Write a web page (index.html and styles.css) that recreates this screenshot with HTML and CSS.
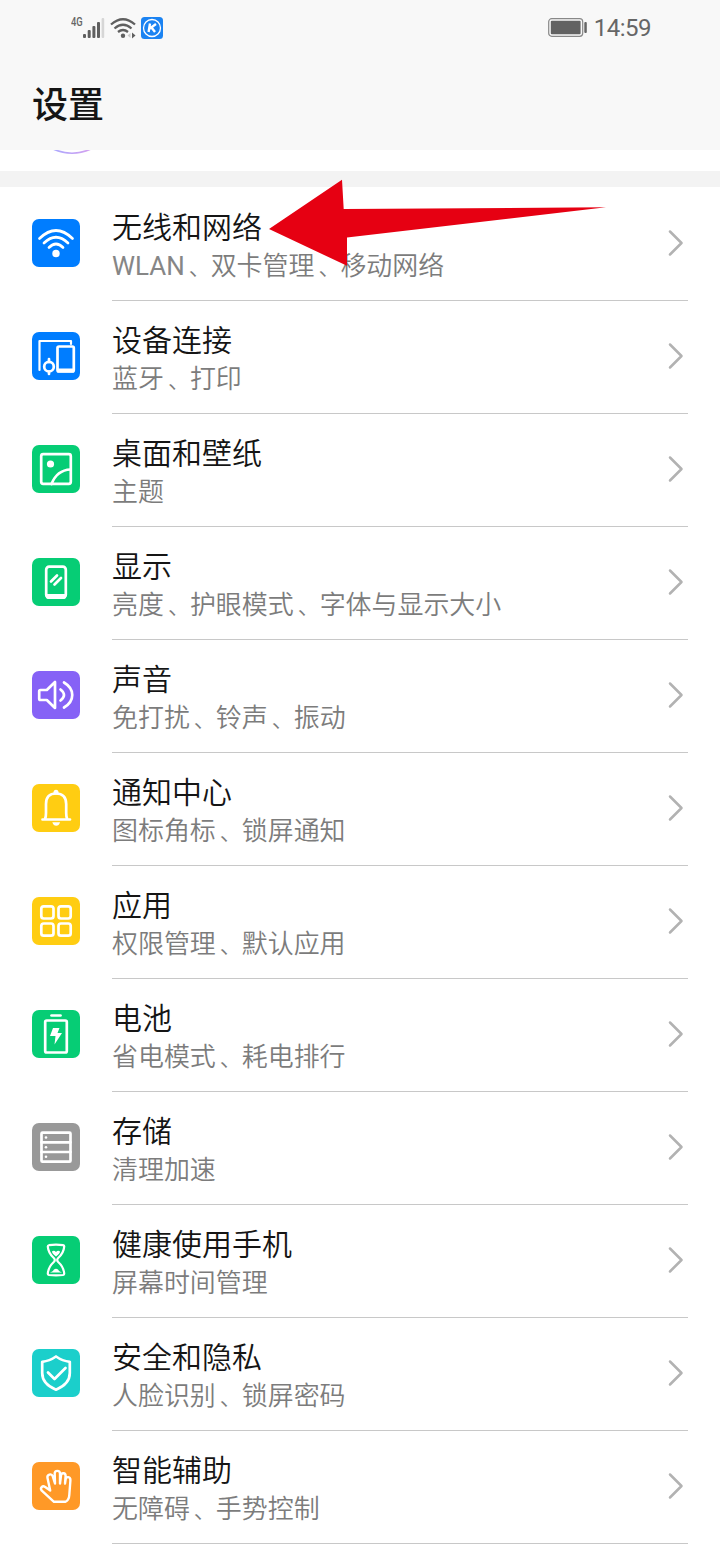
FILE: index.html
```
<!DOCTYPE html>
<html lang="zh-CN">
<head>
<meta charset="utf-8">
<title>设置</title>
<link rel="stylesheet" href="styles.css">
</head>
<body>
<div class="screen">
  <header class="header">
    <div class="status">
      <div class="status-left">
        <span class="net">4G</span>
        <svg class="signal" width="22" height="22" viewBox="0 0 22 22"><g fill="#5f5f5f"><rect x="0" y="17" width="3" height="4" rx="1"/><rect x="4.700" y="13" width="3" height="8" rx="1"/><rect x="9.400" y="9" width="3" height="12" rx="1"/><rect x="14" y="5" width="3" height="16" rx="1"/></g><rect x="18.600" y="1" width="2.600" height="20" rx="1" fill="#d6d6d6"/></svg>
        <svg class="wifi" width="26" height="22" viewBox="0 0 26 22"><g fill="none" stroke="#5f5f5f" stroke-width="2.300"><path d="M1 7.500Q13-3 25 7.500"/><path d="M4.500 11.500Q13 4 21.500 11.500"/><path d="M8 15Q13 11 18 15"/></g><circle cx="13" cy="18.800" r="2.200" fill="#5f5f5f"/><path d="M20.500 16v5l-3-2.500z" fill="#ccc"/><path d="M22 15.500v6l3.500-3z" fill="#5f5f5f"/></svg>
        <svg class="kapp" width="22" height="22" viewBox="0 0 22 22"><rect width="22" height="22" rx="3.500" fill="#1b83f2"/><circle cx="11" cy="11" r="8.500" fill="none" stroke="#fff" stroke-width="1.300"/><path d="M9 6.500 7.600 15M15 7l-6.200 4.500M10.500 10.500l3.500 4.500" fill="none" stroke="#fff" stroke-width="2.400"/></svg>
      </div>
      <div class="status-right">
        <svg width="39" height="20" viewBox="0 0 39 20"><rect x=".7" y=".7" width="34" height="17.600" rx="3" fill="#f8f8f8" stroke="#888" stroke-width="1.200"/><rect x="2.800" y="2.800" width="29.800" height="13.400" rx="1" fill="#626262"/><rect x="36.300" y="4" width="2.500" height="11" rx="1" fill="#666"/></svg>
        <span class="time">14:59</span>
      </div>
    </div>
    <h1 class="title">设置</h1>
  </header>
  <div class="account"><svg width="48" height="6" viewBox="0 0 48 6"><defs><linearGradient id="ring"><stop offset="0" stop-color="#a9a9ff"/><stop offset="1" stop-color="#d6a0ee"/></linearGradient></defs><path d="M3-2Q24 8.500 45-2" fill="none" stroke="url(#ring)" stroke-width="1.700"/></svg></div>
  <div class="band"></div>
  <main class="list" id="list">
    <div class="row"><svg class="icon blue" viewBox="0 0 48 48"><g class="ln"><path d="M7.500 19.500Q24 3.500 40.500 19.500"/><path d="M12 24Q24 12.500 36 24"/><path d="M17 28.500Q24 21.500 31 28.500"/></g><circle cx="24" cy="34.500" r="3.700" fill="#fff"/></svg><div class="body"><div class="text"><div class="name">无线和网络</div><div class="desc"><span class="latin">WLAN</span><i>、</i>双卡管理<i>、</i>移动网络</div></div><svg class="chev" viewBox="0 0 16 28"><path d="M2 2.500 13.500 14 2 25.500"/></svg></div></div>
    <div class="row"><svg class="icon blue" viewBox="0 0 48 48"><path class="ln thin" d="M7.500 38V9H39v3"/><rect class="ln" x="25.500" y="14.500" width="16.300" height="25" rx="1.500"/><path d="M25.500 36.500h16.300v4H25.500z" fill="#fff"/><circle class="ln" cx="17" cy="34.700" r="4.800"/><path class="ln" d="M17 27v3M17 39.500V42"/></svg><div class="body"><div class="text"><div class="name">设备连接</div><div class="desc">蓝牙<i>、</i>打印</div></div><svg class="chev" viewBox="0 0 16 28"><path d="M2 2.500 13.500 14 2 25.500"/></svg></div></div>
    <div class="row"><svg class="icon green" viewBox="0 0 48 48"><rect class="ln" x="9.200" y="9.200" width="29.600" height="29.600" rx="2"/><circle cx="18.500" cy="19" r="3.600" fill="#fff"/><path class="ln" d="M19.500 39Q25 25 38.500 24.500"/></svg><div class="body"><div class="text"><div class="name">桌面和壁纸</div><div class="desc">主题</div></div><svg class="chev" viewBox="0 0 16 28"><path d="M2 2.500 13.500 14 2 25.500"/></svg></div></div>
    <div class="row"><svg class="icon green" viewBox="0 0 48 48"><rect class="ln" x="14.200" y="8.700" width="19.600" height="31" rx="3"/><path d="M14 36h20v2.500q0 2.500-2.500 2.500h-15Q14 41 14 38.500z" fill="#fff"/><path class="ln" d="m19 23.500 6-6M22.500 26.500l6.500-6.500"/></svg><div class="body"><div class="text"><div class="name">显示</div><div class="desc">亮度<i>、</i>护眼模式<i>、</i>字体与显示大小</div></div><svg class="chev" viewBox="0 0 16 28"><path d="M2 2.500 13.500 14 2 25.500"/></svg></div></div>
    <div class="row"><svg class="icon purple" viewBox="0 0 48 48"><path class="ln" d="M8.500 19h6.300L23 11v26l-8.200-8H8.500Q7.200 29 7.200 27.700v-7.400Q7.200 19 8.500 19z"/><path class="ln" d="M28.500 18.500q7 5.500 0 11M32 11.500c11 6.500 11 18.500 0 25"/></svg><div class="body"><div class="text"><div class="name">声音</div><div class="desc">免打扰<i>、</i>铃声<i>、</i>振动</div></div><svg class="chev" viewBox="0 0 16 28"><path d="M2 2.500 13.500 14 2 25.500"/></svg></div></div>
    <div class="row"><svg class="icon yellow" viewBox="0 0 48 48"><path class="ln" d="M10.500 35.500h27.500M13 35q1-2 1-6v-9q0-10.500 10-10.500T34.200 20v9q0 4 1 6"/><circle cx="24" cy="8.300" r="2.500" fill="#fff"/><path d="M20.300 38.300h7.800q-1.200 3.500-3.900 3.500t-3.900-3.500z" fill="#fff"/></svg><div class="body"><div class="text"><div class="name">通知中心</div><div class="desc">图标角标<i>、</i>锁屏通知</div></div><svg class="chev" viewBox="0 0 16 28"><path d="M2 2.500 13.500 14 2 25.500"/></svg></div></div>
    <div class="row"><svg class="icon yellow" viewBox="0 0 48 48"><g class="ln"><rect x="9.300" y="9.300" width="12.200" height="12.200" rx="2.500"/><rect x="26.500" y="9.300" width="12.200" height="12.200" rx="2.500"/><rect x="9.300" y="26.500" width="12.200" height="12.200" rx="2.500"/><rect x="26.500" y="26.500" width="12.200" height="12.200" rx="2.500"/></g></svg><div class="body"><div class="text"><div class="name">应用</div><div class="desc">权限管理<i>、</i>默认应用</div></div><svg class="chev" viewBox="0 0 16 28"><path d="M2 2.500 13.500 14 2 25.500"/></svg></div></div>
    <div class="row"><svg class="icon green" viewBox="0 0 48 48"><rect class="ln" x="13.200" y="10.500" width="21.600" height="32" rx="1.500"/><path class="ln" d="M19.500 5.500h9"/><path d="M21 18h6.500l-2 5h4.500l-7.500 11.500 1-8.500h-5.500z" fill="#fff"/></svg><div class="body"><div class="text"><div class="name">电池</div><div class="desc">省电模式<i>、</i>耗电排行</div></div><svg class="chev" viewBox="0 0 16 28"><path d="M2 2.500 13.500 14 2 25.500"/></svg></div></div>
    <div class="row"><svg class="icon gray" viewBox="0 0 48 48"><rect class="ln" x="9.500" y="9.700" width="29" height="29" rx="1"/><path class="ln" d="M9.500 19.300h29M9.500 29h29"/><g fill="#fff"><circle cx="14" cy="14.500" r="1.300"/><circle cx="14" cy="24.300" r="1.300"/><circle cx="14" cy="33.800" r="1.300"/></g></svg><div class="body"><div class="text"><div class="name">存储</div><div class="desc">清理加速</div></div><svg class="chev" viewBox="0 0 16 28"><path d="M2 2.500 13.500 14 2 25.500"/></svg></div></div>
    <div class="row"><svg class="icon green" viewBox="0 0 48 48"><path class="ln thin" d="M17 9.200q7-1.200 14 0 1.400.3 1.200 1.500-.5 6.500-6 11.300-2 2 0 4 5.500 5 6 11.500.1 1.200-1.200 1.500-7 .900-14 0-1.300-.3-1.200-1.500.5-6.500 6-11.500 2-2 0-4-5.500-4.800-6-11.300Q15.700 9.500 17 9.200z"/><path d="M24 20.500q-4.500-3.500-4-5 2-1.500 4 .5 2-2 4-.5.5 1.500-4 5zM18 36.500q3-1 4-3 2-1.500 4 0 1 2 4 3z" fill="#fff"/></svg><div class="body"><div class="text"><div class="name">健康使用手机</div><div class="desc">屏幕时间管理</div></div><svg class="chev" viewBox="0 0 16 28"><path d="M2 2.500 13.500 14 2 25.500"/></svg></div></div>
    <div class="row"><svg class="icon teal" viewBox="0 0 48 48"><path class="ln" d="M24 7.500q6.500 4.500 13.800 5.300V24q0 11-13.800 16.700Q10.200 35 10.200 24V12.800Q17.500 12 24 7.500z"/><path class="ln" d="m16 23.500 6.500 6.500 11-11"/></svg><div class="body"><div class="text"><div class="name">安全和隐私</div><div class="desc">人脸识别<i>、</i>锁屏密码</div></div><svg class="chev" viewBox="0 0 16 28"><path d="M2 2.500 13.500 14 2 25.500"/></svg></div></div>
    <div class="row"><svg class="icon orange" viewBox="0 0 48 48"><path class="ln hand" d="M22 39.800H33.500Q37 38 37.300 33L38.400 18.500C38.700 14.500 34 14 33.600 17.500L33 21.500 33.600 14C33.800 10.500 29.300 10.200 29 13.500L28 21.500V11.500C28 8 22.700 8 22.700 11.500L23 21.500 20.700 14.200C19.500 11 14.700 12.500 15.500 16L18.200 28.500 13.200 25C10.500 23.200 7.600 26 9.800 28.700Z"/></svg><div class="body"><div class="text"><div class="name">智能辅助</div><div class="desc">无障碍<i>、</i>手势控制</div></div><svg class="chev" viewBox="0 0 16 28"><path d="M2 2.500 13.500 14 2 25.500"/></svg></div></div>
  </main>
  <svg class="arrow" width="340" height="90" viewBox="0 0 340 90"><path d="M1 51 74 1.700l1.700 29.300L338 29.300 79 59.500v28.300z" fill="#e60012"/></svg>
</div>
</body>
</html>
```
FILE: styles.css
```
* { box-sizing: border-box; }
body { margin: 0; background: #fff; }
.screen {
  position: relative;
  width: 720px;
  height: 1560px;
  overflow: hidden;
  background: #fff;
  font-family: Roboto, "Noto Sans CJK SC", sans-serif;
  color: #151515;
}
.header { height: 150px; background: #f8f8f8; }
.status {
  display: flex;
  justify-content: space-between;
  height: 56px;
  padding: 0 69px 0 71px;
  color: #666;
}
.status-left { display: flex; align-items: flex-start; }
.status-left svg { margin-top: 17px; }
.net { width: 12px; margin-top: 15px; font: 500 12.500px/14px Roboto, sans-serif; transform: scaleX(.75); transform-origin: left; }
.wifi { margin-left: 5px; }
.kapp { margin-left: 5px; }
.status-right { display: flex; align-items: center; gap: 7px; }
.time { font-size: 24px; line-height: 28px; letter-spacing: -.5px; }
.title {
  margin: 19px 0 0 32px;
  font: 500 36px/54px "Noto Sans CJK SC", sans-serif;
}
.account { height: 21px; padding-left: 48px; }
.account svg { display: block; }
.band { height: 16px; background: #f3f3f3; }
.list { padding: 1px 32px 0; }
.row { display: flex; height: 113px; }
.icon { flex: none; width: 48px; height: 48px; margin: 31px 32px 0 0; border-radius: 7px; }
.blue { background: #007dff; }
.green { background: #06cd75; }
.purple { background: #8662f6; }
.yellow { background: #ffcd12; }
.gray { background: #999; }
.teal { background: #1bcfcb; }
.orange { background: #ff9927; }
.ln { fill: none; stroke: #fff; stroke-width: 2.7; stroke-linecap: round; stroke-linejoin: round; }
.thin { stroke-width: 2.2; }
.hand { stroke-width: 2.4; }
.body {
  display: flex;
  flex: 1;
  justify-content: space-between;
  border-bottom: 1px solid #c8c8c8;
}
.text { padding-top: 18px; white-space: nowrap; font-weight: 350; }
.name { font-size: 30px; line-height: 44px; }
.desc { font-size: 25.950px; line-height: 32px; color: #7c7c7c; }
.latin { font-weight: 400; color: #868686; }
.desc i { display: inline-block; width: 26px; padding-left: 4px; font-size: 22px; font-style: normal; }
.chev { width: 16px; height: 28px; margin: 41px 4px 0 0; }
.chev path { fill: none; stroke: #b2b2b2; stroke-width: 2.5; stroke-linecap: round; stroke-linejoin: round; }
.arrow { position: absolute; left: 268px; top: 178px; }
```
